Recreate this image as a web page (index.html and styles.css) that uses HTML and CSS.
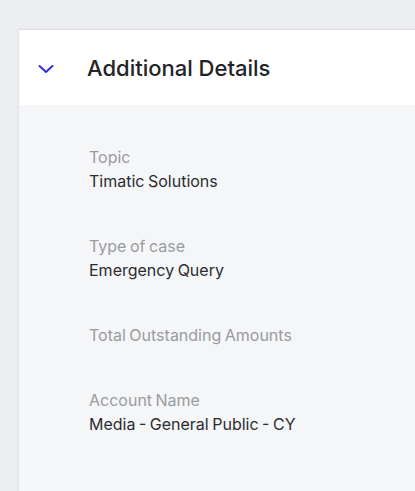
FILE: index.html
```html
<!DOCTYPE html>
<html lang="en">
<head>
    <meta charset="UTF-8">
    <meta name="viewport" content="width=device-width, initial-scale=1.0">
    <title>Additional Details</title>
    <link rel="stylesheet" href="styles.css">
</head>
<body>
    <div class="page">
        <div class="card">
            <div class="card-header">
                <svg class="chevron" width="16" height="10" viewBox="0 0 16 10">
                    <path d="M1.5 2 L8 8 L14.5 2" fill="none" stroke="#2f2fd6" stroke-width="2" stroke-linecap="round" stroke-linejoin="round"/>
                </svg>
                <h2>Additional Details</h2>
            </div>
            <div class="card-body">
                <div class="field">
                    <div class="label">Topic</div>
                    <div class="value">Timatic Solutions</div>
                </div>
                <div class="field">
                    <div class="label">Type of case</div>
                    <div class="value">Emergency Query</div>
                </div>
                <div class="field">
                    <div class="label">Total Outstanding Amounts</div>
                    <div class="value"></div>
                </div>
                <div class="field">
                    <div class="label">Account Name</div>
                    <div class="value">Media - General Public - CY</div>
                </div>
            </div>
        </div>
    </div>
</body>
</html>
```

FILE: styles.css
```css
html, body {
    margin: 0;
    padding: 0;
    overflow: hidden;
}
body {
    font-family: Inter, "Noto Sans", sans-serif;
    background-color: #edeef1;
    height: 491px;
}
.page {
    padding: 29px 0 0 19px;
}
.card {
    margin-right: -40px;
    border-top: 1px solid #dcdde0;
    box-shadow: -1px 0 2px rgba(0,0,0,0.06);
    background: #f5f6f8;
    min-height: 520px;
}
.card-header {
    background: white;
    height: 75px;
    display: flex;
    align-items: center;
    padding-left: 19px;
}
.chevron {
    display: block;
    margin-top: 2px;
}
.card-header h2 {
    margin: 0 0 0 33px;
    font-size: 22px;
    font-weight: 500;
    color: #232427;
}
.card-body {
    padding: 40px 0 0 70px;
}
.field {
    margin-bottom: 41px;
    font-size: 16px;
    line-height: 24px;
    word-spacing: -1px;
}
.label {
    color: #9a9b9e;
}
.value {
    color: #2b2c30;
}
```
